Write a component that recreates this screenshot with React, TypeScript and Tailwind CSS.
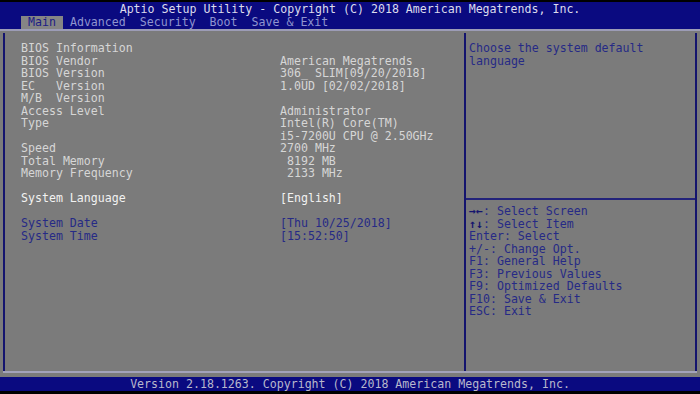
import React from 'react';

type Row = { label: string; value: string; tone?: 'info' | 'select' | 'link' } | null;

const rows: Row[] = [
  { label: 'BIOS Information', value: '' },
  { label: 'BIOS Vendor', value: 'American Megatrends' },
  { label: 'BIOS Version', value: '306_ SLIM[09/20/2018]' },
  { label: 'EC   Version', value: '1.0UD [02/02/2018]' },
  { label: 'M/B  Version', value: '' },
  { label: 'Access Level', value: 'Administrator' },
  { label: 'Type', value: 'Intel(R) Core(TM)' },
  { label: '', value: 'i5-7200U CPU @ 2.50GHz' },
  { label: 'Speed', value: '2700 MHz' },
  { label: 'Total Memory', value: ' 8192 MB' },
  { label: 'Memory Frequency', value: ' 2133 MHz' },
  null,
  { label: 'System Language', value: '[English]', tone: 'select' },
  null,
  { label: 'System Date', value: '[Thu 10/25/2018]', tone: 'link' },
  { label: 'System Time', value: '[15:52:50]', tone: 'link' },
];

const keys: { key: string; text: string; bold?: boolean }[] = [
  { key: '→←', text: ': Select Screen', bold: true },
  { key: '↑↓', text: ': Select Item', bold: true },
  { key: 'Enter', text: ': Select' },
  { key: '+/-', text: ': Change Opt.' },
  { key: 'F1', text: ': General Help' },
  { key: 'F3', text: ': Previous Values' },
  { key: 'F9', text: ': Optimized Defaults' },
  { key: 'F10', text: ': Save & Exit' },
  { key: 'ESC', text: ': Exit' },
];

const tabs = ['Main', 'Advanced', 'Security', 'Boot', 'Save & Exit'];

const toneClass = (tone?: string) => {
  if (tone === 'select') return 'text-[#f2f2f2]';
  if (tone === 'link') return 'text-[#262a86]';
  return 'text-[#d6d6d6]';
};

export default function App() {
  return (
    <div
      className="w-[700px] h-[394px] flex flex-col bg-black overflow-hidden text-[11.6px] leading-[12.5px] whitespace-pre"
      style={{ fontFamily: '"DejaVu Sans Mono", "Liberation Mono", monospace' }}
    >
      {/* title + tabs */}
      <div className="mt-[2px] h-[27px] bg-[#0a0a80] flex flex-col">
        <div className="h-[14px] pt-[1px] leading-[12px] text-center text-[#dcdcec]">
          Aptio Setup Utility - Copyright (C) 2018 American Megatrends, Inc.
        </div>
        <div className="flex-1 flex items-end pl-[21px]">
          {tabs.map((t, i) => (
            <div
              key={t}
              className={
                i === 0
                  ? 'h-[13px] leading-[13px] px-[7px] mr-[7px] bg-[#858585] text-[#1c1c86]'
                  : 'h-[13px] leading-[13px] pr-[14px] text-[#8f95cf]'
              }
            >
              {t}
            </div>
          ))}
        </div>
      </div>

      {/* main */}
      <div className="flex-1 bg-[#7b7b7b] border-t-2 border-[#9c9cb6] flex flex-col px-[3px] pt-[2px]">
        <div className="flex-1 flex border-l-2 border-r-2 border-[#14146e]">
          <div className="w-[459px] pl-[16px] pt-[9px]">
            {rows.map((r, i) =>
              r === null ? (
                <div key={i} className="h-[12.5px]" />
              ) : (
                <div key={i} className={`grid grid-cols-[259px_1fr] h-[12.5px] ${toneClass(r.tone)}`}>
                  <span>{r.label}</span>
                  <span>{r.value}</span>
                </div>
              )
            )}
          </div>
          <div className="flex-1 flex flex-col border-l-2 border-[#14146e]">
            <div className="h-[165px] pl-[3px] pt-[9px] text-[#262a86] whitespace-normal">
              Choose the system default language
            </div>
            <div className="border-t-2 border-[#23237a] pl-[3px] pt-[5px] text-[#262a86]">
              {keys.map((k) => (
                <div key={k.key} className="h-[12.5px]">
                  <span className={k.bold ? 'font-bold text-[#14146e]' : ''}>{k.key}</span>
                  {k.text}
                </div>
              ))}
            </div>
          </div>
        </div>
        <div className="h-[2px] bg-[#a2a2ba]" />
        <div className="h-[4px]" />
      </div>

      {/* footer */}
      <div className="h-[14px] bg-[#0a0a80] text-center text-[#b8b8cc] leading-[14px]">
        Version 2.18.1263. Copyright (C) 2018 American Megatrends, Inc.
      </div>
      <div className="h-[3px]" />
    </div>
  );
}
